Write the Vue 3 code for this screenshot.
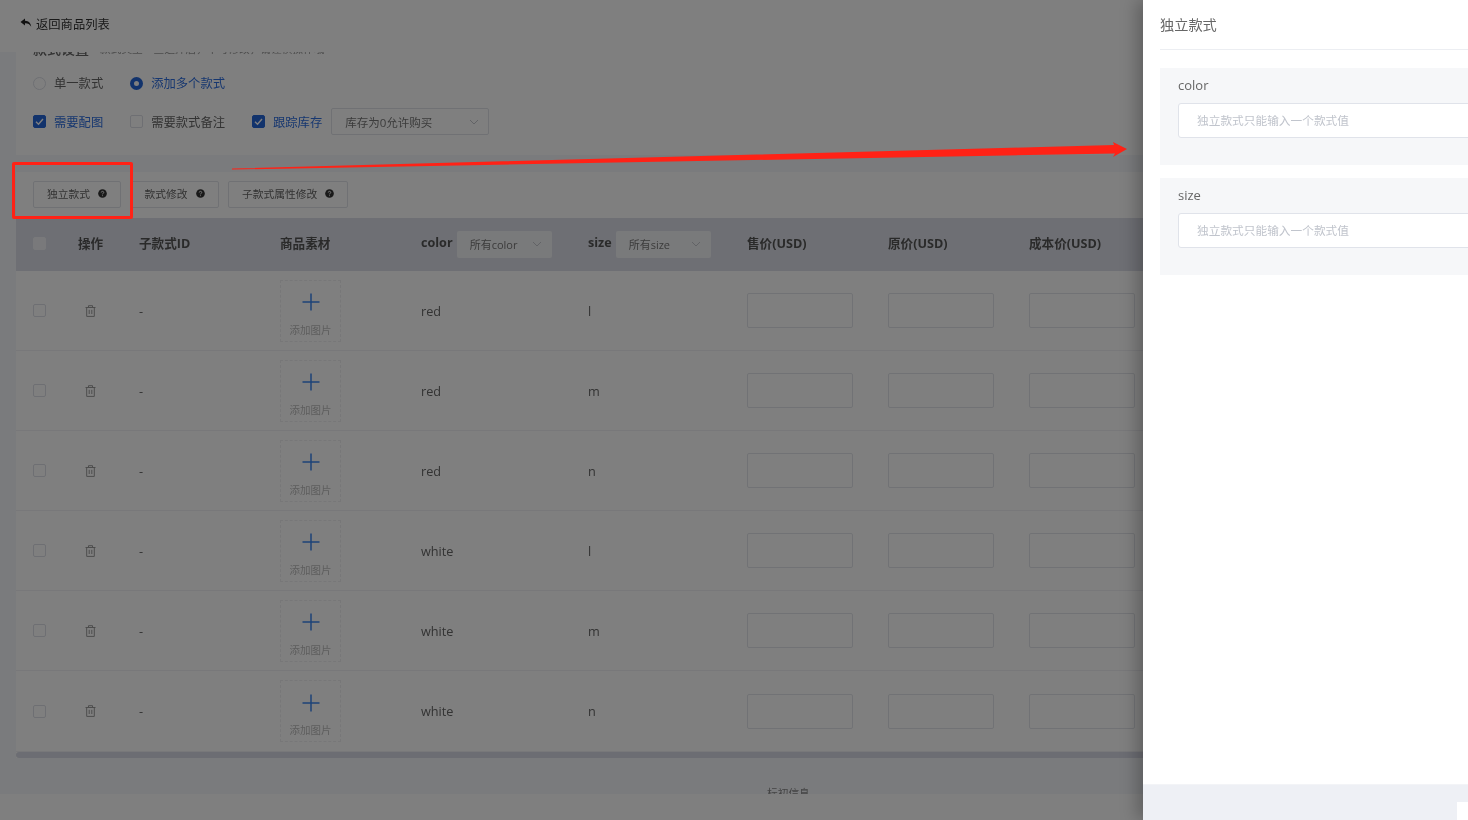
<script setup>
const rows = [
  { color: 'red', size: 'l' },
  { color: 'red', size: 'm' },
  { color: 'red', size: 'n' },
  { color: 'white', size: 'l' },
  { color: 'white', size: 'm' },
  { color: 'white', size: 'n' },
]
const buttons = ['独立款式', '款式修改', '子款式属性修改']
const fields = ['color', 'size']
</script>

<template>
  <div class="screen">
    <header class="topbar">
      <svg class="back" viewBox="0 0 12 10" width="12" height="10">
        <path d="M5 0.5 L0.5 4 L5 7.5 V5.3 C7.8 5.2 9.8 6.2 11.2 8.8 C11 5.2 8.8 2.9 5 2.7 Z" fill="#222" />
      </svg>
      <span>返回商品列表</span>
    </header>

    <main class="main">
      <div class="scroll">
        <section class="card top-card">
          <div class="top-title"><b>款式设置</b><span>款式类型一旦选择后，不可修改，请谨慎操作哦</span></div>
          <div class="opt-row">
            <label class="opt"><i class="radio"></i>单一款式</label>
            <label class="opt on"><i class="radio checked"></i>添加多个款式</label>
          </div>
          <div class="opt-row check-row">
            <label class="opt on">
              <i class="check checked"><svg viewBox="0 0 13 13"><path d="M3 6.8 L5.5 9.2 L10 4" fill="none" stroke="#fff" stroke-width="1.4" /></svg></i>需要配图
            </label>
            <label class="opt"><i class="check"></i>需要款式备注</label>
            <label class="opt on">
              <i class="check checked"><svg viewBox="0 0 13 13"><path d="M3 6.8 L5.5 9.2 L10 4" fill="none" stroke="#fff" stroke-width="1.4" /></svg></i>跟踪库存
            </label>
            <div class="stock-select">
              <span>库存为0允许购买</span>
              <svg class="chev" viewBox="0 0 10 6"><path d="M1 1 L5 5 L9 1" fill="none" stroke="#c4c7cc" stroke-width="1" /></svg>
            </div>
          </div>
        </section>

        <section class="card table-card">
          <div class="toolbar">
            <button v-for="b in buttons" :key="b" class="tool-btn" type="button">
              {{ b }}
              <svg class="help" viewBox="0 0 10 10" width="9" height="9">
                <circle cx="5" cy="5" r="4.8" fill="#333" />
                <path d="M3.6 3.9 C3.6 2.2 6.4 2.2 6.4 3.8 C6.4 4.8 5 4.8 5 6 M5 7 V7.9" fill="none" stroke="#fff" stroke-width="1" />
              </svg>
            </button>
          </div>

          <div class="grid head">
            <div class="cell first"><i class="check head-check"></i></div>
            <div class="cell">操作</div>
            <div class="cell">子款式ID</div>
            <div class="cell">商品素材</div>
            <div class="cell">
              color
              <div class="head-select"><span>所有color</span><svg class="chev" viewBox="0 0 10 6"><path d="M1 1 L5 5 L9 1" fill="none" stroke="#c4c7cc" stroke-width="1" /></svg></div>
            </div>
            <div class="cell">
              size
              <div class="head-select"><span>所有size</span><svg class="chev" viewBox="0 0 10 6"><path d="M1 1 L5 5 L9 1" fill="none" stroke="#c4c7cc" stroke-width="1" /></svg></div>
            </div>
            <div class="cell">售价(USD)</div>
            <div class="cell">原价(USD)</div>
            <div class="cell">成本价(USD)</div>
          </div>

          <div v-for="(r, i) in rows" :key="i" class="grid row">
            <div class="cell first"><i class="check"></i></div>
            <div class="cell">
              <svg class="trash" viewBox="0 0 11 12" width="11" height="12">
                <path d="M0.5 2.5 H10.5 M3.5 2.5 V0.7 H7.5 V2.5 M1.7 2.5 V11.4 H9.3 V2.5 M4.2 4.8 V9 M6.8 4.8 V9" fill="none" stroke="#9a9a9a" stroke-width="1" />
              </svg>
            </div>
            <div class="cell">-</div>
            <div class="cell">
              <div class="upload">
                <svg class="plus" viewBox="0 0 18 18" width="18" height="18">
                  <path d="M9 0.5 V17.5 M0.5 9 H17.5" stroke="#3a85f0" stroke-width="1.5" />
                </svg>
                <span>添加图片</span>
              </div>
            </div>
            <div class="cell">{{ r.color }}</div>
            <div class="cell">{{ r.size }}</div>
            <div class="cell"><div class="price"></div></div>
            <div class="cell"><div class="price"></div></div>
            <div class="cell"><div class="price"></div></div>
          </div>
          <div class="scrollbar"></div>
        </section>

        <div class="clipped">标初信息</div>
      </div>
    </main>
    <footer class="foot"></footer>

    <div class="mask"></div>

    <div class="callout"></div>
    <svg class="arrow" viewBox="0 0 1468 820" width="1468" height="820">
      <polygon points="232,168.6 1114,145 1113,142 1127,149 1113,157 1115,153.4 232,169.6" fill="#ff2216" />
    </svg>

    <aside class="drawer">
      <div class="drawer-main">
        <h2 class="drawer-title">独立款式</h2>
        <div v-for="f in fields" :key="f" class="field">
          <div class="field-label">{{ f }}</div>
          <input class="field-input" type="text" placeholder="独立款式只能输入一个款式值" />
        </div>
      </div>
      <div class="drawer-foot"><div class="foot-btn"></div></div>
    </aside>
  </div>
</template>

<style>
html, body { margin: 0; overflow: hidden; }
</style>

<style scoped>
* { box-sizing: border-box; }
.screen {
  position: relative;
  width: 1468px;
  height: 820px;
  overflow: hidden;
  display: flex;
  flex-direction: column;
  background: #fff;
  font-family: "Open Sans", "Noto Sans CJK SC", sans-serif;
  color: #606266;
  font-size: 12px;
  filter: blur(0.4px);
}
.topbar {
  height: 52px;
  flex: none;
  background: #fff;
  display: flex;
  align-items: center;
  padding: 0 0 4px 20px;
  gap: 4px;
  color: #333;
  font-size: 12.3px;
}
.back { margin-top: -2px; }
.main {
  height: 742px;
  flex: none;
  overflow: hidden;
  background: #f5f6fa;
}
.scroll { margin-top: -12px; padding-left: 16px; width: 1468px; }
.card { background: #fff; }
.top-card { height: 115px; padding-left: 17px; }
.top-title { height: 18px; line-height: 18px; display: flex; gap: 11px; font-size: 10.7px; color: #999; }
.top-title b { font-size: 14px; color: #666; font-weight: 500; }
.opt-row {
  display: flex;
  align-items: center;
  height: 18px;
  margin-top: 16px;
  gap: 27px;
  font-size: 12.3px;
}
.check-row { height: 27px; margin-top: 16px; }
.opt { display: flex; align-items: center; gap: 8px; color: #666; }
.opt.on { color: #2f6fe0; }
.radio {
  width: 13px;
  height: 13px;
  border: 1px solid #dcdfe6;
  border-radius: 50%;
  display: block;
}
.radio.checked { border: 4px solid #2566d8; background: #fff; }
.check {
  width: 13px;
  height: 13px;
  border: 1px solid #dcdfe6;
  border-radius: 2px;
  display: block;
  background: #fff;
  flex: none;
}
.check.checked { background: #2566d8; border-color: #2566d8; }
.check svg { display: block; width: 13px; height: 13px; margin: -1px; }
.stock-select {
  margin-left: -18px;
  width: 158px;
  height: 27px;
  border: 1px solid #e0e3e9;
  border-radius: 2px;
  display: flex;
  align-items: center;
  justify-content: space-between;
  padding: 0 9px 0 13px;
  font-size: 11.5px;
  color: #777;
}
.chev { width: 10px; height: 6px; flex: none; }

.table-card { margin-top: 17px; width: 1452px; }
.toolbar { height: 46px; padding: 9px 17px; display: flex; gap: 9.5px; }
.tool-btn {
  height: 27px;
  padding: 0 13px 2px;
  border: 1px solid #e0e3e9;
  border-radius: 2px;
  background: #fff;
  display: flex;
  align-items: center;
  gap: 8px;
  font: inherit;
  font-size: 10.75px;
  color: #666;
}
.help { flex: none; }
.grid {
  display: grid;
  grid-template-columns: 62px 61px 141px 141px 167px 159px 141px 141px 141px;
  align-items: center;
}
.head {
  height: 53px;
  padding-bottom: 4px;
  background: #dcdfe8;
  font-weight: 700;
  font-size: 12.6px;
  color: #555;
}
.cell { display: flex; align-items: center; }
.first { padding-left: 17px; }
.head-check { background: #f2f3f6; border-color: #f2f3f6; margin-top: 1px; }
.head-select {
  margin-left: 4px;
  margin-bottom: -3px;
  width: 95px;
  height: 27px;
  border-radius: 2px;
  background: #f3f4f6;
  display: flex;
  align-items: center;
  justify-content: space-between;
  padding: 0 10px 0 13px;
  font-weight: 400;
  font-size: 11px;
  color: #777;
}
.row {
  height: 80.1px;
  border-bottom: 1px solid #f0f1f4;
  font-size: 12.7px;
  color: #666;
}
.trash { margin-left: 7px; }
.upload {
  width: 61px;
  height: 62px;
  border: 1px dashed #eeeef1;
  display: flex;
  flex-direction: column;
  align-items: center;
  padding-top: 12.5px;
  gap: 11.5px;
  font-size: 10.5px;
  line-height: 14px;
  color: #bbb;
}
.plus { display: block; }
.price {
  width: 105.5px;
  height: 35px;
  border: 1px solid #e2e5eb;
  border-radius: 2px;
}
.scrollbar { height: 6px; background: #d8dbe6; border-radius: 3px; }
.clipped {
  margin-top: 28.5px;
  padding-left: 751px;
  line-height: 14px;
  font-size: 10.7px;
  color: #888;
}
.foot { height: 26px; flex: none; background: #fff; }

.mask { position: absolute; inset: 0; background: rgba(0, 0, 0, 0.5); }
.callout {
  position: absolute;
  left: 12px;
  top: 162px;
  width: 121px;
  height: 57px;
  border: 3px solid #ff2216;
  border-radius: 2px;
}
.arrow { position: absolute; left: 0; top: 0; pointer-events: none; }

.drawer {
  position: absolute;
  left: 1143px;
  top: 0;
  width: 700px;
  height: 820px;
  background: #fff;
  box-shadow: -6px 0 16px rgba(0, 0, 0, 0.25);
  display: flex;
  flex-direction: column;
}
.drawer-main { flex: 1; padding: 0 17px; }
.drawer-title {
  margin: 0 0 18px;
  height: 50px;
  line-height: 50px;
  border-bottom: 1px solid #eceef2;
  font-size: 14.2px;
  font-weight: 400;
  color: #666;
}
.field {
  height: 96.5px;
  margin-bottom: 13.5px;
  background: #f6f7f9;
  padding: 8px 18px 0;
}
.field-label { height: 27px; line-height: 18px; font-size: 13px; color: #666; }
.field-input {
  display: block;
  width: 100%;
  height: 35px;
  border: 1px solid #e0e3ea;
  border-radius: 3px;
  background: #fff;
  padding: 0 18px 2px;
  font: inherit;
  font-size: 11.7px;
  outline: none;
}
.field-input::placeholder { color: #c0c4cc; }
.drawer-foot {
  height: 36px;
  flex: none;
  background: #eef0f5;
  border-top: 1px solid #f3f4f7;
  padding: 17px 0 0 314px;
}
.foot-btn { width: 80px; height: 30px; background: #fff; }
</style>
